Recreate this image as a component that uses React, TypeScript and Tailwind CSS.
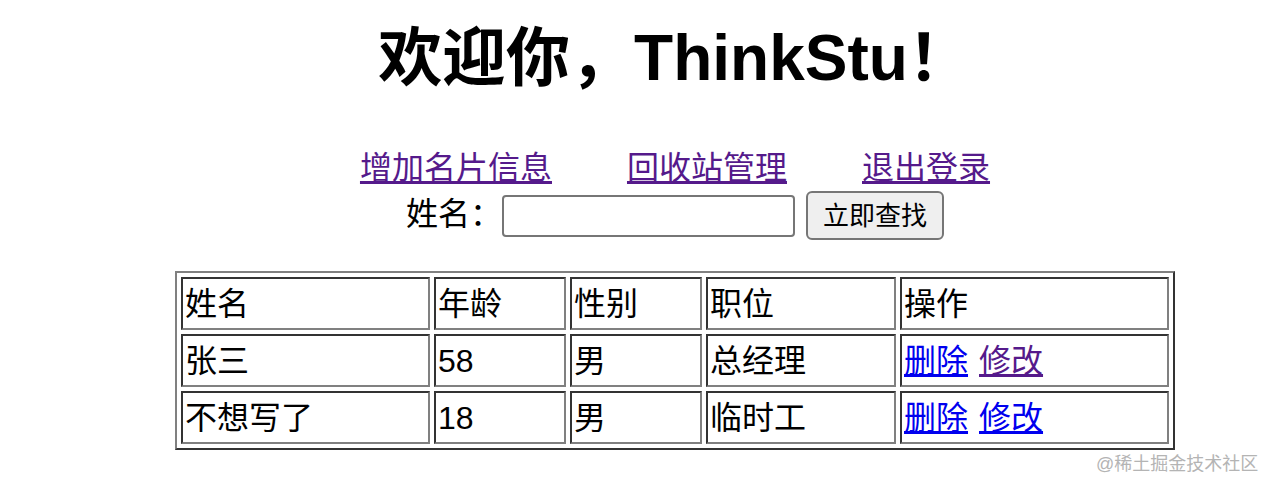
const rows = [
  { name: '张三', age: '58', sex: '男', job: '总经理', editVisited: true },
  { name: '不想写了', age: '18', sex: '男', job: '临时工', editVisited: false },
]

const cell =
  'h-[53px] p-[2px] text-left align-middle font-normal border-2 border-t-[#333] border-l-[#333] border-r-[#808080] border-b-[#808080]'

export default function App() {
  return (
    <div
      className="relative h-[478px] w-full overflow-hidden bg-white text-black"
      style={{ fontFamily: '"Liberation Sans", "Noto Sans CJK SC", sans-serif' }}
    >
      <div className="w-[1350px] flex flex-col items-center">
        {/* Title */}
        <h1 className="pt-[26px] text-[64px] leading-[64px] font-bold">欢迎你，ThinkStu！</h1>

        {/* Top links */}
        <div className="mt-[58px] flex justify-center gap-[75px] text-[32px] leading-[40px]">
          <a href="#" className="text-[#551a8b] underline">增加名片信息</a>
          <a href="#" className="text-[#551a8b] underline">回收站管理</a>
          <a href="#" className="text-[#551a8b] underline">退出登录</a>
        </div>

        {/* Search form */}
        <div className="mt-[3px] flex items-center justify-center h-[49px]">
          <span className="text-[32px] leading-[40px] w-[96px] -mt-[4px]">姓名：</span>
          <input
            type="text"
            className="h-[42px] w-[293px] rounded-[4px] border-2 border-[#767676] bg-white px-2 text-[26px] outline-none"
          />
          <button className="ml-[11px] h-[49px] w-[138px] rounded-[6px] border-2 border-[#767676] bg-[#efefef] text-[26px] leading-none">
            立即查找
          </button>
        </div>

        {/* Cards table */}
        <table className="mt-[31px] border-separate border-spacing-[4px] border-2 border-t-[#808080] border-l-[#808080] border-r-[#333] border-b-[#333] text-[32px] leading-[44px]">
          <thead>
            <tr>
              <th className={`${cell} w-[249px]`}>姓名</th>
              <th className={`${cell} w-[132px]`}>年龄</th>
              <th className={`${cell} w-[132px]`}>性别</th>
              <th className={`${cell} w-[190px]`}>职位</th>
              <th className={`${cell} w-[269px]`}>操作</th>
            </tr>
          </thead>
          <tbody>
            {rows.map((r) => (
              <tr key={r.name}>
                <td className={cell}>{r.name}</td>
                <td className={cell}>{r.age}</td>
                <td className={cell}>{r.sex}</td>
                <td className={cell}>{r.job}</td>
                <td className={cell}>
                  <a href="#" className="text-[#0000ee] underline">删除</a>
                  <a
                    href="#"
                    className={`ml-[11px] underline ${r.editVisited ? 'text-[#551a8b]' : 'text-[#0000ee]'}`}
                  >
                    修改
                  </a>
                </td>
              </tr>
            ))}
          </tbody>
        </table>
      </div>

      {/* Watermark */}
      <div className="absolute left-[1096px] top-[452px] whitespace-nowrap text-[18px] leading-[24px] text-[#b4b4b4]">
        @稀土掘金技术社区
      </div>
    </div>
  )
}
